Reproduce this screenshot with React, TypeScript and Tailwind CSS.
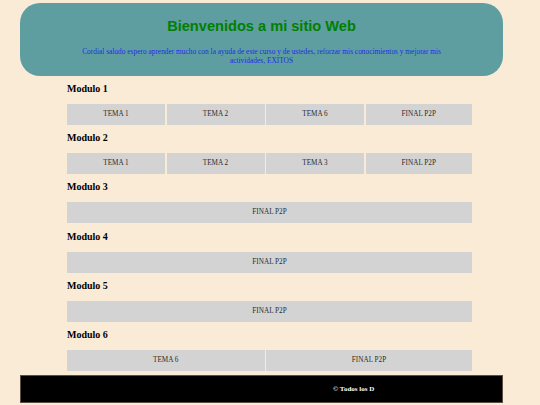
const modules = [
  { name: "Modulo 1", cells: [["TEMA 1", 1], ["TEMA 2", 1], ["TEMA 6", 1], ["FINAL P2P", 1]] },
  { name: "Modulo 2", cells: [["TEMA 1", 1], ["TEMA 2", 1], ["TEMA 3", 1], ["FINAL P2P", 1]] },
  { name: "Modulo 3", cells: [["FINAL P2P", 4]] },
  { name: "Modulo 4", cells: [["FINAL P2P", 4]] },
  { name: "Modulo 5", cells: [["FINAL P2P", 4]] },
  { name: "Modulo 6", cells: [["TEMA 6", 2], ["FINAL P2P", 2]] },
] as const;

const spanClass: Record<number, string> = {
  1: "col-span-1",
  2: "col-span-2",
  4: "col-span-4",
};

export default function App() {
  return (
    <div className="min-h-[405px] bg-[#faebd7] pt-[3px] font-['Liberation_Serif',serif]">
      {/* Header */}
      <header className="ml-[20px] w-[483px] rounded-[20px] bg-[#5f9ea0] pt-[15px] pb-[11px] text-center">
        <h1 className="font-['Liberation_Sans',Arial,sans-serif] text-[14.6px] leading-[17px] font-bold text-[#008000]">
          Bienvenidos a mi sitio Web
        </h1>
        <p className="mx-auto mt-[13px] w-[380px] text-[7.4px] leading-[8.5px] text-[#1a2ee6]">
          Cordial saludo espero aprender mucho con la ayuda de este curso y de ustedes, reforzar mis conocimientos y mejorar mis actividades, EXITOS
        </p>
      </header>

      {/* Modules */}
      <main className="ml-[67px] mt-[7px] flex w-[405px] flex-col gap-[7.2px]">
        {modules.map((m) => (
          <section key={m.name}>
            <h3 className="h-[12px] text-[10px] leading-[12px] font-bold text-black">{m.name}</h3>
            <div className="mt-[9px] grid grid-cols-[98px_98px_98px_1fr] gap-x-[1.5px]">
              {m.cells.map(([label, span], i) => (
                <div
                  key={i}
                  className={`${spanClass[span]} flex h-[21px] items-center justify-center bg-[#d3d3d3] text-[7.2px] text-[#2b2b2b]`}
                >
                  {label}
                </div>
              ))}
            </div>
          </section>
        ))}
      </main>

      {/* Footer */}
      <footer className="mt-[4px] ml-[20px] flex h-[28px] w-[483px] items-center border border-[#5c4e40] bg-black pl-[312px]">
        <span className="whitespace-nowrap text-[7px] font-bold text-white">© Todos los D</span>
      </footer>
    </div>
  );
}
